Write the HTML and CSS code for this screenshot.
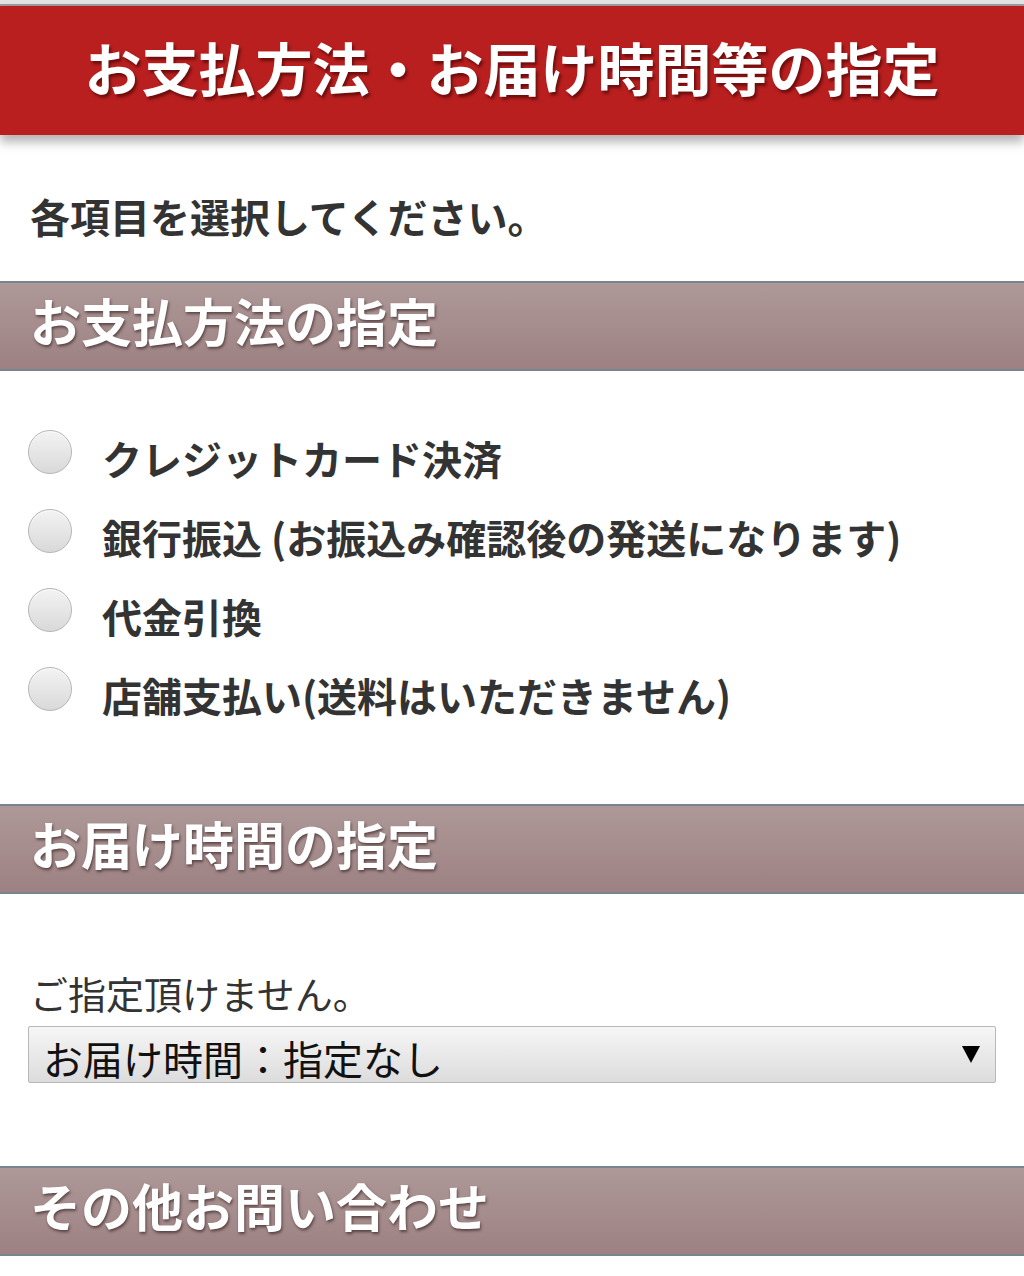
FILE: index.html
```html
<!DOCTYPE html>
<html lang="ja">
<head>
  <meta charset="UTF-8">
  <title>お支払方法・お届け時間等の指定</title>
  <link rel="stylesheet" href="styles.css">
</head>
<body>

  <div class="topline"></div>
  <h1 class="page-title">お支払方法・お届け時間等の指定</h1>

  <p class="intro">各項目を選択してください。</p>

  <h2 class="section-bar">お支払方法の指定</h2>
  <div class="pay-list">
    <label class="pay-row"><input type="radio" name="pay" class="radio"><span>クレジットカード決済</span></label>
    <label class="pay-row"><input type="radio" name="pay" class="radio"><span>銀行振込 (お振込み確認後の発送になります)</span></label>
    <label class="pay-row"><input type="radio" name="pay" class="radio"><span>代金引換</span></label>
    <label class="pay-row"><input type="radio" name="pay" class="radio"><span>店舗支払い(送料はいただきません)</span></label>
  </div>

  <h2 class="section-bar">お届け時間の指定</h2>
  <div class="time-block">
    <p class="note">ご指定頂けません。</p>
    <div class="select-box">
      <span class="select-text">お届け時間：指定なし</span>
      <span class="select-arrow"></span>
    </div>
  </div>

  <h2 class="section-bar">その他お問い合わせ</h2>

</body>
</html>
```

FILE: styles.css
```css
body {
  margin: 0;
  font-family: "Noto Sans CJK JP", "Noto Sans", sans-serif;
  background-color: #fff;
  color: #333;
}
.topline {
  height: 4px;
  background-color: #e2e2e2;
  border-bottom: 2px solid #9c9c9c;
}
.page-title {
  margin: 0;
  height: 121px;
  padding-bottom: 8px;
  display: flex;
  align-items: center;
  justify-content: center;
  background-color: #b91f1f;
  color: #fff;
  font-size: 57px;
  font-weight: 700;
  line-height: 57px;
  text-shadow: 2px 3px 3px rgba(60, 0, 0, 0.6);
  box-shadow: 0 7px 10px rgba(0, 0, 0, 0.3);
  position: relative;
}
.intro {
  margin: 0;
  padding: 61px 30px 45px;
  font-size: 40px;
  line-height: 40px;
  font-weight: 700;
  color: #333;
}
.section-bar {
  margin: 0;
  height: 74px;
  padding: 0 30px 12px;
  line-height: 74px;
  font-size: 51px;
  font-weight: 700;
  color: #fff;
  background: linear-gradient(#ae9898, #9d8183);
  border-top: 2px solid #78858e;
  border-bottom: 2px solid #78858e;
  text-shadow: 1px 2px 3px rgba(40, 20, 20, 0.6);
}
.pay-list {
  padding: 45px 0 72px 28px;
}
.pay-row {
  display: flex;
  align-items: center;
  height: 79px;
  font-size: 40px;
  font-weight: 700;
  color: #333;
}
.pay-row span {
  padding-top: 4px;
  line-height: 40px;
}
.radio {
  appearance: none;
  -webkit-appearance: none;
  margin: 0 30px 8px 0;
  width: 44px;
  height: 44px;
  box-sizing: border-box;
  border-radius: 50%;
  border: 1px solid #b5b5b5;
  background: linear-gradient(#f3f3f3, #d9d9d9);
  box-shadow: inset 0 1px 1px rgba(255, 255, 255, 0.8);
  flex-shrink: 0;
}
.time-block {
  padding: 80px 28px 83px;
}
.note {
  margin: 0;
  padding-left: 2px;
  font-size: 38px;
  line-height: 38px;
  color: #333;
}
.select-box {
  margin-top: 14px;
  height: 57px;
  box-sizing: border-box;
  padding: 11px 15px 0 14px;
  display: flex;
  justify-content: space-between;
  align-items: flex-start;
  border: 1px solid #b8b8b8;
  border-radius: 2px;
  background: linear-gradient(#f6f6f6, #dcdcdc);
}
.select-text {
  font-size: 40px;
  line-height: 40px;
  color: #111;
}
.select-arrow {
  margin-top: 8px;
  width: 0;
  height: 0;
  border-left: 9px solid transparent;
  border-right: 9px solid transparent;
  border-top: 17px solid #000;
}
```
